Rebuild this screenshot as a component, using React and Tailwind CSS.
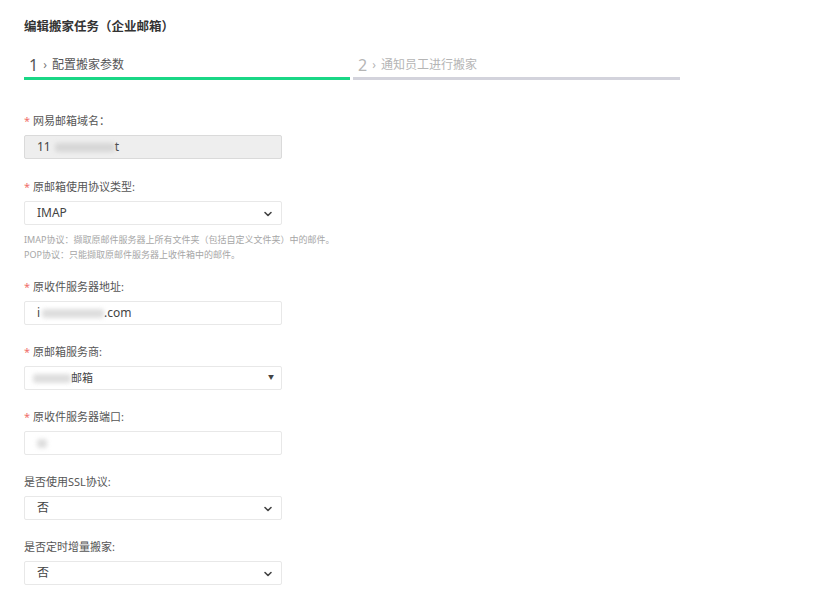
import React from "react";

const font = { fontFamily: '"Noto Sans", "Noto Sans CJK SC", sans-serif' };

function Chevron() {
  return (
    <svg width="10" height="10" viewBox="0 0 10 10" className="absolute right-[8px] top-[7px]">
      <path d="M2 3.5 L5 6.5 L8 3.5" fill="none" stroke="#444" strokeWidth="1.6" strokeLinecap="round" strokeLinejoin="round" />
    </svg>
  );
}

function Label({ req, children }) {
  return (
    <div className="h-4 leading-4 text-[11px] text-[#555] mb-[6px] flex items-center">
      {req && <span className="text-[#f0706a] mr-[3px]">*</span>}
      <span>{children}</span>
    </div>
  );
}

function Box({ children, disabled, className = "" }) {
  return (
    <div
      className={
        "relative w-[258px] h-6 rounded-[2px] border flex items-center pl-3 text-[12px] text-[#444] " +
        (disabled ? "bg-[#eeeeee] border-[#dadada]" : "bg-white border-[#e8e8e8]") +
        " " +
        className
      }
    >
      {children}
    </div>
  );
}

function Blur({ w, ml = 0 }) {
  return (
    <span
      className="inline-block h-[9px] bg-[#c8c8c8] rounded-[3px] blur-[2px] opacity-60"
      style={{ width: w, marginLeft: ml }}
    />
  );
}

export default function App() {
  return (
    <div className="w-[824px] h-[592px] bg-white pl-6 pt-[17px] overflow-hidden" style={font}>
      <div className="text-[12.5px] font-bold text-[#333] leading-5">编辑搬家任务（企业邮箱）</div>

      <div className="flex mt-[18px] w-[656px]">
        <div className="w-[326px]">
          <div className="flex items-center h-5 pl-[5px] text-[#555]">
            <span className="text-[16px] leading-5">1</span>
            <span className="text-[12px] mx-[5px] text-[#777]">›</span>
            <span className="text-[12px]">配置搬家参数</span>
          </div>
          <div className="h-[3px] bg-[#19d786] mt-[2px]" />
        </div>
        <div className="w-[327px] ml-[3px]">
          <div className="flex items-center h-5 pl-[5px] text-[#b5b5b5]">
            <span className="text-[16px] leading-5">2</span>
            <span className="text-[12px] mx-[5px]">›</span>
            <span className="text-[12px]">通知员工进行搬家</span>
          </div>
          <div className="h-[3px] bg-[#d3d3dc] mt-[2px]" />
        </div>
      </div>

      <div className="mt-[33px]">
        <div className="mb-[20px]">
          <Label req>网易邮箱域名：</Label>
          <Box disabled>
            <span>11</span>
            <Blur w={60} ml={4} />
            <span>t</span>
          </Box>
        </div>

        <div className="mb-[17px]">
          <Label req>原邮箱使用协议类型:</Label>
          <Box>
            IMAP
            <Chevron />
          </Box>
          <div className="mt-[7px] text-[9px] leading-[15px] text-[#a6a6a6]">
            <div>IMAP协议：撷取原邮件服务器上所有文件夹（包括自定义文件夹）中的邮件。</div>
            <div>POP协议：只能撷取原邮件服务器上收件箱中的邮件。</div>
          </div>
        </div>

        <div className="mb-[19px]">
          <Label req>原收件服务器地址:</Label>
          <Box>
            <span>i</span>
            <Blur w={62} ml={2} />
            <span>.com</span>
          </Box>
        </div>

        <div className="mb-[19px]">
          <Label req>原邮箱服务商:</Label>
          <Box className="pl-[8px]">
            <Blur w={38} />
            <span className="text-[11px]">邮箱</span>
            <span className="absolute right-[7px] top-[6px] text-[6px] text-[#444]">▼</span>
          </Box>
        </div>

        <div className="mb-[19px]">
          <Label req>原收件服务器端口:</Label>
          <Box>
            <Blur w={10} />
          </Box>
        </div>

        <div className="mb-[19px]">
          <Label>是否使用SSL协议:</Label>
          <Box>
            否
            <Chevron />
          </Box>
        </div>

        <div>
          <Label>是否定时增量搬家:</Label>
          <Box>
            否
            <Chevron />
          </Box>
        </div>
      </div>
    </div>
  );
}
